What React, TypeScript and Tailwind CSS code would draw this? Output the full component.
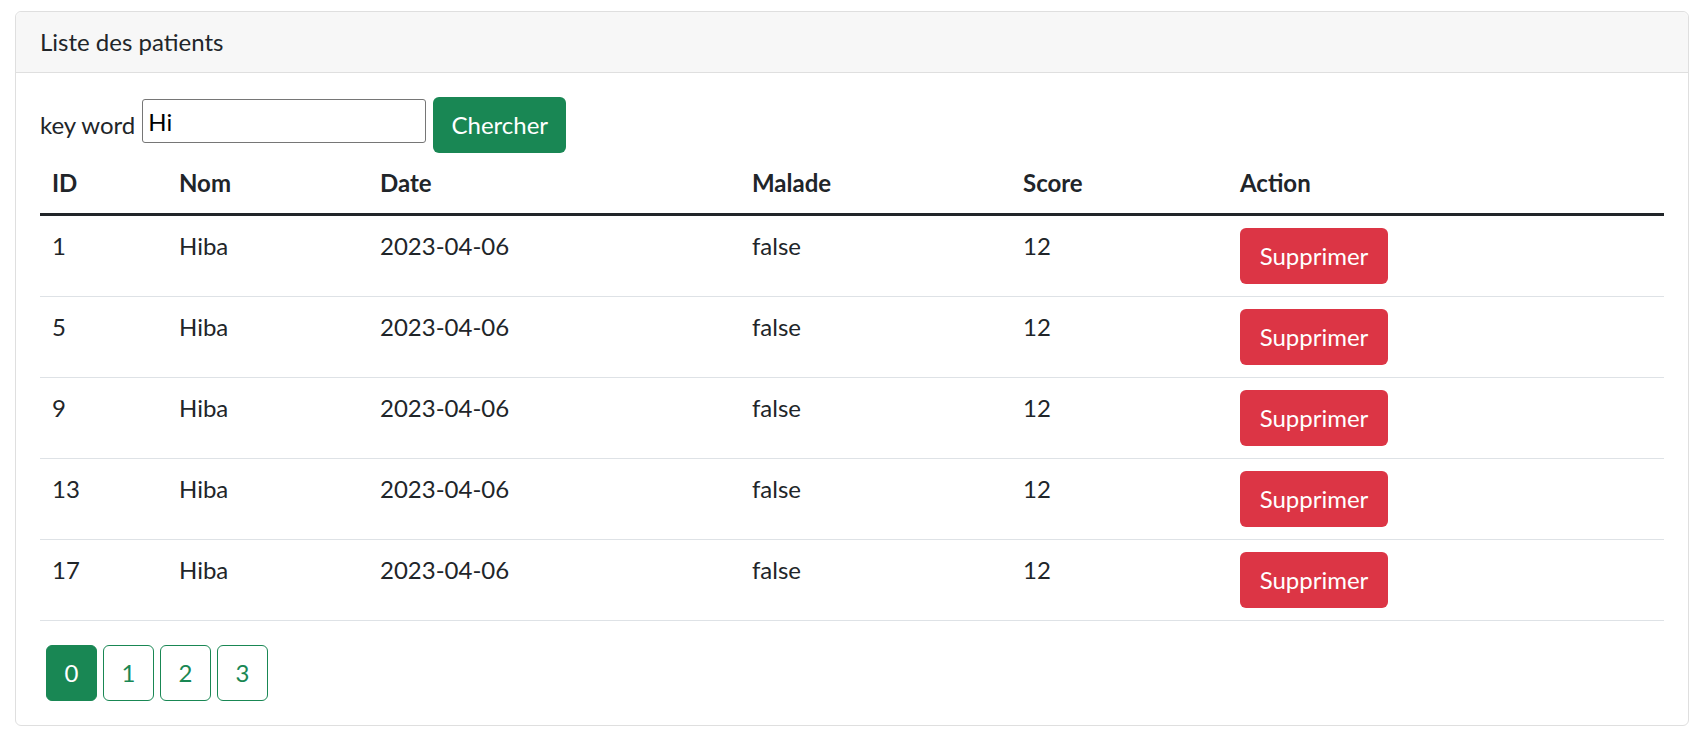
import React from "react";

const rows = [
  { id: 1, nom: "Hiba", date: "2023-04-06", malade: "false", score: 12 },
  { id: 5, nom: "Hiba", date: "2023-04-06", malade: "false", score: 12 },
  { id: 9, nom: "Hiba", date: "2023-04-06", malade: "false", score: 12 },
  { id: 13, nom: "Hiba", date: "2023-04-06", malade: "false", score: 12 },
  { id: 17, nom: "Hiba", date: "2023-04-06", malade: "false", score: 12 },
];

export default function App() {
  return (
    <div
      className="min-h-[747px] bg-white pl-[15px] pr-[19px] pt-[11px] text-[24px] leading-[36px] text-[#212529]"
      style={{ fontFamily: "Lato, 'Open Sans', sans-serif" }}
    >
      <div className="rounded-[6px] border border-[#dfdfdf]">
        <div className="rounded-t-[6px] border-b border-[#dfdfdf] bg-[#f7f7f7] px-[24px] py-[12px]">
          Liste des patients
        </div>
        <div className="p-[24px]">
          <form className="flex items-start" onSubmit={(e) => e.preventDefault()}>
            <label className="mr-[7px] mt-[10px]">key word</label>
            <input
              defaultValue="Hi"
              className="mt-[2px] h-[44px] w-[284px] rounded-[3px] border border-[#767676] px-[5px] text-[24px] text-black outline-none"
            />
            <button
              type="submit"
              className="ml-[7px] h-[56px] w-[133px] rounded-[6px] bg-[#198754] text-[24px] text-white"
            >
              Chercher
            </button>
          </form>

          <table className="w-full table-fixed border-collapse">
            <thead>
              <tr className="border-b-[3px] border-[#212529]">
                <th className="w-[127px] px-[12px] py-[12px] text-left font-bold">ID</th>
                <th className="w-[201px] px-[12px] py-[12px] text-left font-bold">Nom</th>
                <th className="w-[372px] px-[12px] py-[12px] text-left font-bold">Date</th>
                <th className="w-[271px] px-[12px] py-[12px] text-left font-bold">Malade</th>
                <th className="w-[217px] px-[12px] py-[12px] text-left font-bold">Score</th>
                <th className="px-[12px] py-[12px] text-left font-bold">Action</th>
              </tr>
            </thead>
            <tbody>
              {rows.map((r) => (
                <tr key={r.id} className="border-b border-[#dee2e6]">
                  <td className="px-[12px] py-[12px] align-top">{r.id}</td>
                  <td className="px-[12px] py-[12px] align-top">{r.nom}</td>
                  <td className="px-[12px] py-[12px] align-top">{r.date}</td>
                  <td className="px-[12px] py-[12px] align-top">{r.malade}</td>
                  <td className="px-[12px] py-[12px] align-top">{r.score}</td>
                  <td className="px-[12px] py-[12px] align-top">
                    <button className="block h-[56px] w-[148px] rounded-[6px] bg-[#dc3545] text-[24px] text-white">
                      Supprimer
                    </button>
                  </td>
                </tr>
              ))}
            </tbody>
          </table>

          <ul className="mt-[24px] flex gap-[6px] pl-[6px]">
            {[0, 1, 2, 3].map((p) => (
              <li key={p}>
                <button
                  className={
                    p === 0
                      ? "block h-[56px] w-[51px] rounded-[6px] border border-[#198754] bg-[#198754] text-[24px] text-white"
                      : "block h-[56px] w-[51px] rounded-[6px] border border-[#198754] bg-white text-[24px] text-[#198754]"
                  }
                >
                  {p}
                </button>
              </li>
            ))}
          </ul>
        </div>
      </div>
    </div>
  );
}
